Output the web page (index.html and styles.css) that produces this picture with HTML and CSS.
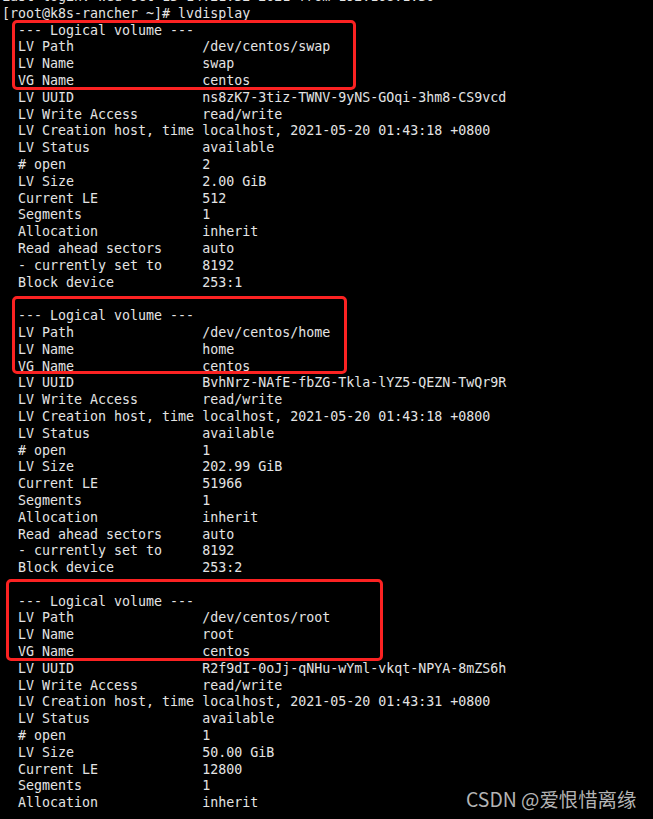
FILE: index.html
```html
<!DOCTYPE html>
<html lang="zh">
<head>
<meta charset="utf-8">
<title>lvdisplay</title>
<link rel="stylesheet" href="styles.css">
</head>
<body>
<div class="term">
<pre class="out">Last login: Wed Oct 13 14:21:32 2021 from 192.168.1.30
[root@k8s-rancher ~]# lvdisplay
  --- Logical volume ---
  LV Path                /dev/centos/swap
  LV Name                swap
  VG Name                centos
  LV UUID                ns8zK7-3tiz-TWNV-9yNS-GOqi-3hm8-CS9vcd
  LV Write Access        read/write
  LV Creation host, time localhost, 2021-05-20 01:43:18 +0800
  LV Status              available
  # open                 2
  LV Size                2.00 GiB
  Current LE             512
  Segments               1
  Allocation             inherit
  Read ahead sectors     auto
  - currently set to     8192
  Block device           253:1

  --- Logical volume ---
  LV Path                /dev/centos/home
  LV Name                home
  VG Name                centos
  LV UUID                BvhNrz-NAfE-fbZG-Tkla-lYZ5-QEZN-TwQr9R
  LV Write Access        read/write
  LV Creation host, time localhost, 2021-05-20 01:43:18 +0800
  LV Status              available
  # open                 1
  LV Size                202.99 GiB
  Current LE             51966
  Segments               1
  Allocation             inherit
  Read ahead sectors     auto
  - currently set to     8192
  Block device           253:2

  --- Logical volume ---
  LV Path                /dev/centos/root
  LV Name                root
  VG Name                centos
  LV UUID                R2f9dI-0oJj-qNHu-wYml-vkqt-NPYA-8mZS6h
  LV Write Access        read/write
  LV Creation host, time localhost, 2021-05-20 01:43:31 +0800
  LV Status              available
  # open                 1
  LV Size                50.00 GiB
  Current LE             12800
  Segments               1
  Allocation             inherit</pre>
<div class="mark mark-swap"></div>
<div class="mark mark-home"></div>
<div class="mark mark-root"></div>
<div class="watermark">CSDN @爱恨惜离缘</div>
</div>
</body>
</html>
```

FILE: styles.css
```css
html, body {
  margin: 0;
  padding: 0;
  background: #000;
  overflow: hidden;
}

.term {
  position: relative;
  width: 653px;
  height: 819px;
  overflow: hidden;
  background: #000;
}

.out {
  margin: -11px 0 0 0;
  padding: 0 0 0 2px;
  font-family: "DejaVu Sans Mono", monospace;
  font-size: 13.3px;
  line-height: 16.8px;
  color: #e4e4e4;
  white-space: pre;
}

.mark {
  position: absolute;
  border: 3px solid #fb2222;
  border-radius: 5px;
  box-sizing: border-box;
}

.mark-swap {
  left: 12px;
  top: 20px;
  width: 344px;
  height: 70px;
}

.mark-home {
  left: 12px;
  top: 296px;
  width: 335px;
  height: 78px;
}

.mark-root {
  left: 6px;
  top: 579px;
  width: 377px;
  height: 82px;
}

.watermark {
  position: absolute;
  left: 466px;
  top: 787px;
  font-family: "Noto Sans CJK SC", sans-serif;
  font-size: 19.4px;
  line-height: 24px;
  color: #b4b4b4;
  white-space: nowrap;
}
```
